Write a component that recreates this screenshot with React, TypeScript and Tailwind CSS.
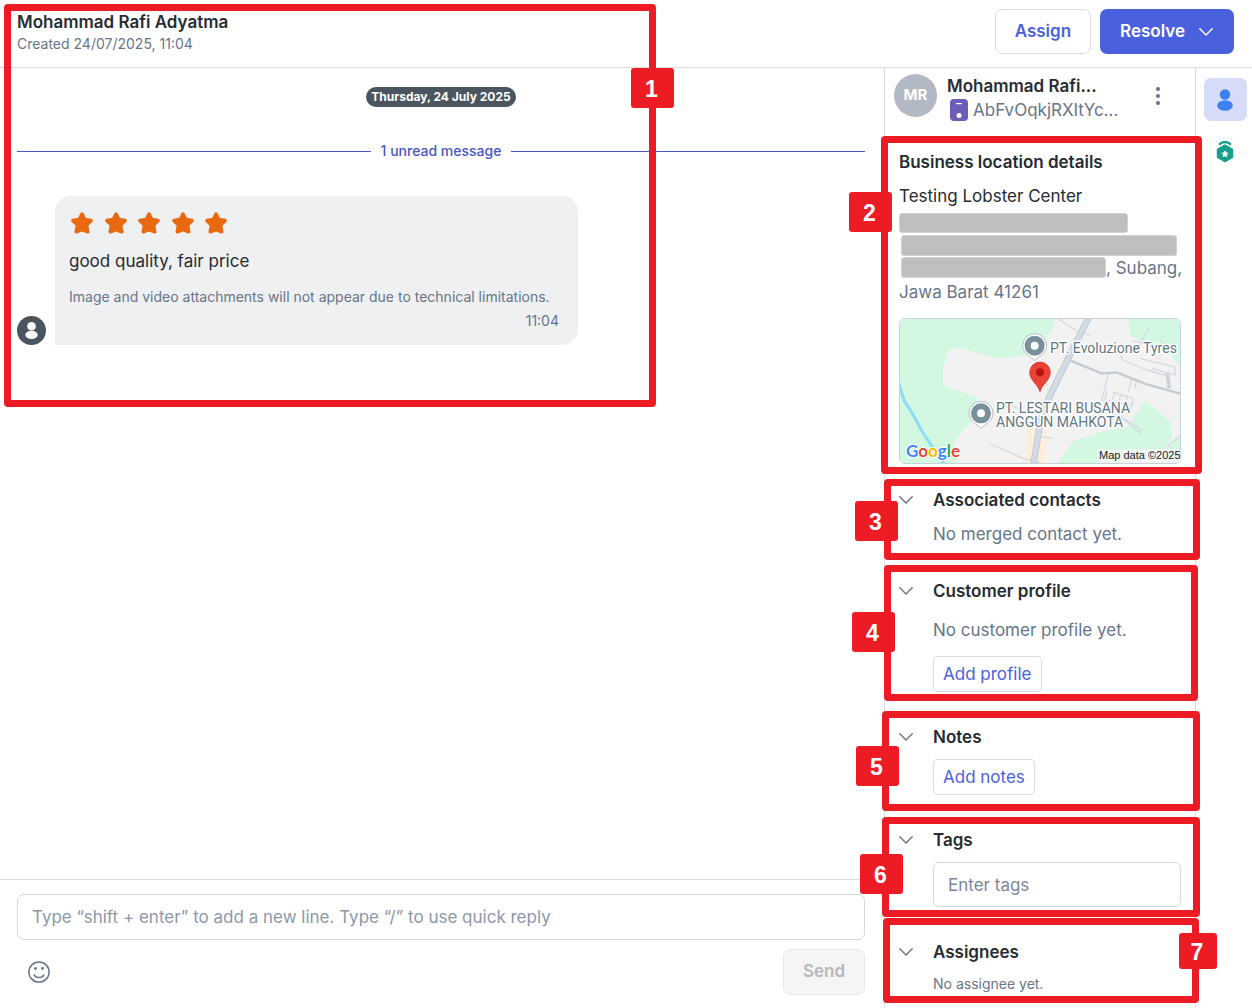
import React from "react";

type CalloutProps = { label: string; box: string; badge: string };

function Callout({ label, box, badge }: CalloutProps) {
  return (
    <>
      <div className={`pointer-events-none absolute z-10 rounded-[4px] border-[7px] border-[#ed1c24] ${box}`} />
      <div
        className={`pointer-events-none absolute z-20 flex items-center justify-center rounded-[3px] bg-[#ed1c24] pt-0.5 pr-0.5 font-['Liberation_Sans',sans-serif] text-[23px] leading-6 font-bold text-white ${badge}`}
      >
        {label}
      </div>
    </>
  );
}

function Chevron({ className = "" }: { className?: string }) {
  return (
    <svg viewBox="0 0 14 8" className={`h-2 w-3.5 shrink-0 ${className}`} fill="none" stroke="currentColor" strokeWidth="1.4" strokeLinecap="round" strokeLinejoin="round" aria-hidden="true">
      <path d="M.8.8 7 7 13.2.8" />
    </svg>
  );
}

function Star() {
  return (
    <svg viewBox="0 0 22 22" className="size-[22px]" fill="#e8690f" stroke="#e8690f" strokeWidth="3.6" strokeLinejoin="round" aria-hidden="true">
      <path d="M11 2.100 13.700 7.600 20 8.600 15.500 13 16.700 19.700 11 17.600 5.300 19.700 6.500 13 2 8.600 8.300 7.600z" />
    </svg>
  );
}

type SectionProps = { title: string; callout: CalloutProps; children: React.ReactNode };

function Section({ title, callout, children }: SectionProps) {
  return (
    <section className="relative pt-[17px] pr-3.5 pb-4 pl-3.5">
      <Callout {...callout} />
      <h2>
        <button type="button" className="flex items-center gap-5 text-[17px] leading-6 font-semibold text-[#272b32]">
          <Chevron className="text-[#67758a]" />
          {title}
        </button>
      </h2>
      <div className="pl-[34px]">{children}</div>
    </section>
  );
}

function PlaceIcon({ x, y }: { x: number; y: number }) {
  return (
    <g transform={`translate(${x} ${y})`}>
      <path d="M0 45C-9 35-36 24-36 0a36 36 0 0 1 72 0c0 24-27 35-36 45z" fill="#fff" stroke="#b5bcc2" strokeWidth="3" />
      <circle r="21" fill="none" stroke="#78909c" strokeWidth="18" />
    </g>
  );
}

function LocationMap() {
  return (
    <div className="mt-3.5 overflow-hidden rounded-[6px] border border-[#c8d2dc]">
      <svg viewBox="0 0 280 144" className="block w-full" role="img" aria-label="Map of the business location">
        <rect width="280" height="144" fill="#f2f2f2" />
        <g transform="scale(.33333) translate(-60 -42)" fill="none" strokeLinejoin="round">
          <path fill="#d3f8e2" d="M50 30H533L512 82 452 144Q440 156 345 159L262 134Q215 122 203 142L190 185V240L292 278 283 340 240 388 219 418 240 442 226 480H50z" />
          <path fill="#d3f8e2" d="M742 30H910V198L872 150 800 116 752 94z" />
          <path fill="#d3f8e2" d="M795 284 872 352 876 398 855 430 700 480H530L582 406 690 374 745 366z" />
          <path fill="#d3f8e2" d="M880 405 910 380V480H840z" />
          <path fill="#fcf0dc" d="M445 340 502 330 496 480H434z" />
          <path stroke="#8cdcf5" strokeWidth="9" d="M55 230 72 286Q105 335 122 372 145 410 192 475" />
          <g stroke="#d5dae1" strokeWidth="4">
            <path d="M530 40 588 75 630 92M715 132 780 118 806 70M760 108 870 128M715 130 728 165 800 195 860 212M780 160 884 186 886 210 815 190" />
            <path d="M686 205 665 285M700 262 760 280M664 285 760 300M680 258 672 300M702 262 694 310M722 266 714 318M742 272 734 322M760 280 750 325M655 310 720 335 780 370M690 300 740 350 780 385 782 370M755 220 745 260M770 224 765 250" />
            <path d="M330 417 430 460 500 480M480 395 515 399M390 300 440 322 480 330M470 225 505 240M900 392 866 420 850 460M840 105 860 128" />
          </g>
          <path stroke="#cbd2da" strokeWidth="11" d="M862 205 868 250" />
          <path stroke="#c3cbd4" strokeWidth="7" d="M555 160 665 205 710 202 800 238 910 268" />
          <path stroke="#bfc8d2" strokeWidth="20" d="M630 30 562 165 505 282Q488 320 478 370L459 485" />
          <path stroke="#d3dae3" strokeWidth="15" d="M630 30 562 165 505 282Q488 320 478 370L459 485" />
          <PlaceIcon x={464} y={122} />
          <PlaceIcon x={303} y={325} />
          <path d="M480 260C474 238 449 226 449 202a31 31 0 0 1 62 0c0 24-25 36-31 58z" fill="#ea4335" stroke="#c5221f" strokeWidth="2" />
          <circle cx="480" cy="202" r="12" fill="#b31412" />
        </g>
        <g fill="#5f7885" stroke="#fff" strokeWidth="3" strokeLinejoin="round" paintOrder="stroke" fontFamily="Roboto, sans-serif" fontSize="14">
          <text x="150" y="34">PT. Evoluzione Tyres</text>
          <text x="96" y="94">PT. LESTARI BUSANA</text>
          <text x="96" y="108">ANGGUN MAHKOTA</text>
        </g>
        <text x="6" y="138" stroke="#fff" strokeWidth="2" paintOrder="stroke" strokeLinejoin="round" fontFamily="Lato, sans-serif" fontSize="17" fontWeight="700">
          <tspan fill="#4285f4">G</tspan>
          <tspan fill="#ea4335">o</tspan>
          <tspan fill="#fbbc04">o</tspan>
          <tspan fill="#4285f4">g</tspan>
          <tspan fill="#34a853">l</tspan>
          <tspan fill="#ea4335">e</tspan>
        </text>
        <rect x="197" y="130" width="83" height="14" fill="#f5f5f5" fillOpacity=".8" />
        <text x="199" y="140" fill="#222" fontFamily="'Liberation Sans', sans-serif" fontSize="11">Map data ©2025</text>
      </svg>
    </div>
  );
}

function SmallButton({ children }: { children: React.ReactNode }) {
  return (
    <button type="button" className="block h-9 rounded-[4px] border border-[#d9dce1] px-[9px] text-[17px] leading-6 text-[#4a61dd]">
      {children}
    </button>
  );
}

export default function App() {
  return (
    <div className="relative flex min-h-screen flex-col overflow-x-hidden bg-white font-['Inter',sans-serif] text-[#272b32]">
      <header className="flex h-[68px] items-start justify-between border-b border-[#d9dce1] pr-[18px] pl-[17px]">
        <div className="pt-2.5">
          <h1 className="text-[17px] leading-6 font-semibold">Mohammad Rafi Adyatma</h1>
          <p className="text-sm leading-5 text-[#67758a]">Created 24/07/2025, 11:04</p>
        </div>
        <div className="flex gap-[9px] pt-[9px]">
          <button type="button" className="h-[45px] rounded-[7px] border border-[#d9dce1] px-[19px] text-[17px] font-semibold text-[#4a61dd]">
            Assign
          </button>
          <button type="button" className="flex h-[45px] items-center gap-3.5 rounded-[7px] bg-[#4a61dd] pr-[21px] pl-5 text-[17px] font-semibold text-white">
            Resolve
            <Chevron />
          </button>
        </div>
      </header>
      <Callout label="1" box="top-1 left-1 h-[403px] w-[652px]" badge="top-[68px] left-[631px] h-10 w-[43px]" />

      <div className="flex flex-1">
        <main className="flex min-w-0 flex-1 flex-col">
          <div className="flex-1 pt-[19px] pr-[19px] pl-[17px]">
            <div className="flex justify-center">
              <span className="rounded-full bg-[#4b555f] px-[5px] text-xs leading-5 font-bold text-white">Thursday, 24 July 2025</span>
            </div>
            <div className="mt-8 flex items-center gap-2.5 text-sm leading-6 font-medium text-[#4757c4]">
              <span className="h-px flex-1 bg-[#4757c4]" />
              1 unread message
              <span className="h-px flex-1 bg-[#4757c4]" />
            </div>
            <div className="mt-[33px] flex items-end gap-[9px]">
              <svg viewBox="0 0 29 29" className="size-[29px] shrink-0" aria-hidden="true">
                <circle cx="14.500" cy="14.500" r="14.500" fill="#4b555f" />
                <circle cx="14.500" cy="10.200" r="4.300" fill="#fff" />
                <ellipse cx="14.500" cy="18.900" rx="6.200" ry="4.200" fill="#fff" />
              </svg>
              <div className="w-[523px] rounded-2xl rounded-bl-none bg-[#eff0f2] px-3.5 pt-4 pb-3">
                <div className="ml-0.5 flex w-[156px] justify-between" role="img" aria-label="5 out of 5 stars">
                  <Star /><Star /><Star /><Star /><Star />
                </div>
                <p className="mt-[15px] text-[17px] leading-6">good quality, fair price</p>
                <p className="mt-3 text-sm leading-6 text-[#67758a]">Image and video attachments will not appear due to technical limitations.</p>
                <p className="pr-[5px] text-right text-sm leading-6 text-[#67758a]">11:04</p>
              </div>
            </div>
          </div>
          <form className="border-t border-[#d9dce1] pt-3.5 pr-[19px] pb-[13px] pl-[17px]" onSubmit={(e) => e.preventDefault()}>
            <input
              type="text"
              aria-label="Message"
              placeholder="Type “shift + enter” to add a new line. Type “/” to use quick reply"
              className="block h-[46px] w-full rounded-[7px] border border-[#d4d7db] px-3.5 text-[17px] placeholder:text-[#8b98ab]"
            />
            <div className="mt-[9px] flex items-center justify-between pl-[11px]">
              <button type="button" aria-label="Insert emoji">
                <svg viewBox="0 0 22 22" className="size-[22px]" fill="none" stroke="#67758a" strokeWidth="1.5" strokeLinecap="round" aria-hidden="true">
                  <circle cx="11" cy="11" r="10.100" />
                  <path d="M6.200 14c1.200 3.300 8.400 3.300 9.600 0" />
                  <circle cx="7.500" cy="7.500" r="1.400" fill="#67758a" stroke="none" />
                  <circle cx="14.500" cy="7.500" r="1.400" fill="#67758a" stroke="none" />
                </svg>
              </button>
              <button type="submit" disabled className="h-[46px] rounded-[7px] border border-[#e8e8e8] bg-[#f5f5f5] px-[19px] text-[17px] font-semibold text-[#b8b8b8]">
                Send
              </button>
            </div>
          </form>
        </main>

        <aside className="w-[312px] shrink-0 border-x border-[#d9dce1]">
          <div className="flex h-[68px] pt-1.5 pr-[35px] pl-[9px]">
            <div className="flex size-[43px] shrink-0 items-center justify-center rounded-full bg-[#b2b8c4] text-[15px] font-bold text-white">MR</div>
            <div className="ml-2.5 min-w-0">
              <div className="text-[17px] leading-6 font-semibold">Mohammad Rafi...</div>
              <div className="flex items-center gap-[5px] pl-[3px] text-[17px] leading-6 text-[#67758a]">
                <svg viewBox="0 0 18 22" className="h-[22px] w-[18px] shrink-0" aria-hidden="true">
                  <rect width="18" height="22" rx="4" fill="#6f5cb8" />
                  <path d="M6.500 4.600h5" stroke="#fff" strokeWidth="1.200" strokeLinecap="round" />
                  <circle cx="9" cy="16.500" r="2.500" fill="#fff" />
                </svg>
                AbFvOqkjRXItYc...
              </div>
            </div>
            <button type="button" aria-label="More options" className="ml-auto h-[43px]">
              <svg viewBox="0 0 4 18" className="h-[18px] w-1" fill="#67758a" aria-hidden="true">
                <circle cx="2" cy="2" r="2" />
                <circle cx="2" cy="9" r="2" />
                <circle cx="2" cy="16" r="2" />
              </svg>
            </button>
          </div>

          <section className="relative px-3.5 pt-3.5 pb-[7px]">
            <Callout label="2" box="top-0 bottom-[-3px] -left-1 -right-[7px]" badge="top-14 -left-9 h-10 w-[43px]" />
            <h2 className="text-[17px] leading-6 font-semibold">Business location details</h2>
            <p className="mt-2.5 text-[17px] leading-6">Testing Lobster Center</p>
            <div className="text-[17px] leading-6 text-[#67758a]">
              <div className="h-6 pt-[5px]">
                <div className="h-5 w-[229px] rounded-[3px] border border-[#d2d2d2] bg-[#bfbfbf]" />
              </div>
              <div className="h-6 pt-[3px] pl-0.5">
                <div className="h-[21px] w-[276px] rounded-[3px] border border-[#d2d2d2] bg-[#bfbfbf]" />
              </div>
              <div className="flex h-6 pl-0.5">
                <span className="mt-px h-[21px] w-[205px] shrink-0 rounded-[3px] border border-[#d2d2d2] bg-[#bfbfbf]" />
                <span className="whitespace-nowrap">, Subang,</span>
              </div>
              <div>Jawa Barat 41261</div>
            </div>
            <LocationMap />
          </section>

          <Section title="Associated contacts" callout={{ label: "3", box: "top-2 bottom-0.5 -left-px -right-[5px]", badge: "top-[30px] -left-[30px] h-10 w-[43px]" }}>
            <p className="mt-2.5 text-[17px] leading-6 text-[#67758a]">No merged contact yet.</p>
          </Section>
          <Section title="Customer profile" callout={{ label: "4", box: "top-[3px] bottom-[7px] -left-px -right-[3px]", badge: "top-[50px] -left-[33px] h-10 w-[43px]" }}>
            <p className="mt-[15px] mb-3.5 text-[17px] leading-6 text-[#67758a]">No customer profile yet.</p>
            <SmallButton>Add profile</SmallButton>
          </Section>
          <Section title="Notes" callout={{ label: "5", box: "top-[3px] bottom-0 -left-[3px] -right-[5px]", badge: "top-[38px] -left-[29px] h-10 w-[43px]" }}>
            <div className="mt-2.5">
              <SmallButton>Add notes</SmallButton>
            </div>
          </Section>
          <Section title="Tags" callout={{ label: "6", box: "top-1.5 bottom-1.5 -left-[3px] -right-[5px]", badge: "top-[43px] -left-[25px] h-10 w-[43px]" }}>
            <input
              type="text"
              aria-label="Tags"
              placeholder="Enter tags"
              className="mt-2.5 block h-[45px] w-full rounded-[6px] border border-[#d4d7db] px-3.5 text-[17px] placeholder:text-[#7b8799]"
            />
          </Section>
          <section className="relative px-3.5 pt-[17px] pb-3.5">
            <Callout label="7" box="-top-[5px] bottom-[5px] -left-0.5 -right-1" badge="top-2.5 -right-[22px] h-9 w-[38px]" />
            <h2>
              <button type="button" className="flex items-center gap-5 text-[17px] leading-6 font-semibold">
                <Chevron className="text-[#67758a]" />
                Assignees
              </button>
            </h2>
            <p className="mt-2.5 pl-[34px] text-sm leading-5 text-[#67758a]">No assignee yet.</p>
          </section>
        </aside>

        <nav className="flex w-14 shrink-0 flex-col items-center gap-5 pt-2.5 pl-0.5">
          <button type="button" aria-label="Contact details" className="flex size-[43px] items-center justify-center rounded-[7px] bg-[#d6dcf8]">
            <svg viewBox="0 0 16 22" className="h-[22px] w-4" fill="#3b82ee" aria-hidden="true">
              <circle cx="8" cy="5.500" r="5.200" />
              <ellipse cx="8" cy="16.500" rx="7.800" ry="5.200" />
            </svg>
          </button>
          <button type="button" aria-label="Loyalty">
            <svg viewBox="0 0 18 22" className="h-[22px] w-[18px]" aria-hidden="true">
              <path d="M3.700 3.200C5 .3 13 .3 14.300 3.200" fill="none" stroke="#169e8c" strokeWidth="2.200" strokeLinecap="round" />
              <path d="M9 3.300 17.200 8v8.800L9 21.500.8 16.800V8z" fill="#169e8c" stroke="#fff" strokeWidth="1" paintOrder="stroke" strokeLinejoin="round" />
              <path d="m9 9.900 1 1.900 2.100.3-1.500 1.500.4 2.100L9 14.800l-2 .9.400-2.100-1.500-1.500 2.100-.3z" fill="#fff" stroke="#fff" strokeWidth=".7" strokeLinejoin="round" />
            </svg>
          </button>
        </nav>
      </div>
    </div>
  );
}
